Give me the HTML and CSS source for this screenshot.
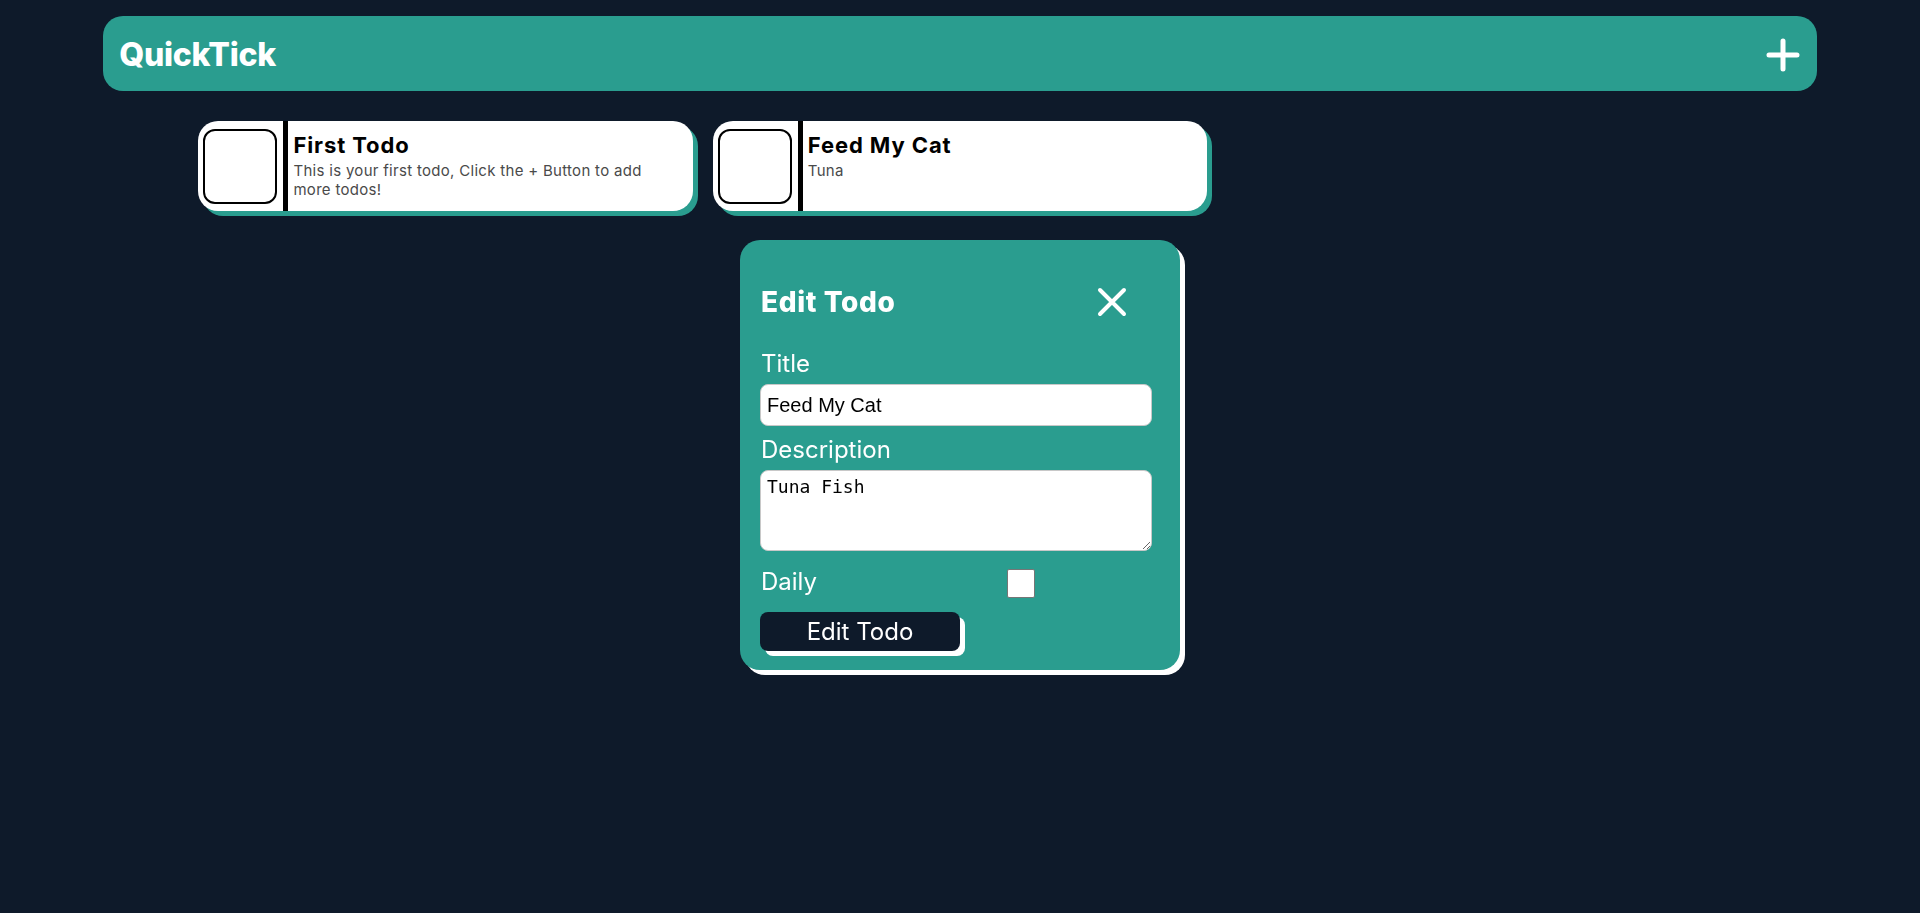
FILE: index.html
```html
<!DOCTYPE html>
<html lang="en">
<head>
<meta charset="utf-8">
<title>QuickTick</title>
<link rel="stylesheet" href="styles.css">
</head>
<body>
  <header class="topbar">
    <h1 class="brand">QuickTick</h1>
    <button class="add-btn" aria-label="Add todo">
      <svg width="34" height="34" viewBox="0 0 34 34"><path d="M17 3v28M3 17h28" stroke="#fff" stroke-width="5" stroke-linecap="round" fill="none"/></svg>
    </button>
  </header>

  <main class="todos">
    <div class="card">
      <div class="check-wrap"><div class="check"></div></div>
      <div class="card-body">
        <h2 class="card-title">First Todo</h2>
        <p class="card-desc">This is your first todo, Click the + Button to add more todos!</p>
      </div>
    </div>
    <div class="card">
      <div class="check-wrap"><div class="check"></div></div>
      <div class="card-body">
        <h2 class="card-title">Feed My Cat</h2>
        <p class="card-desc">Tuna</p>
      </div>
    </div>
  </main>

  <div class="modal">
    <div class="modal-head">
      <h2 class="modal-title">Edit Todo</h2>
      <button class="close-btn" aria-label="Close">
        <svg width="30" height="30" viewBox="0 0 30 30"><path d="M3 3l24 24M27 3L3 27" stroke="#fff" stroke-width="4" stroke-linecap="round" fill="none"/></svg>
      </button>
    </div>
    <label class="field-label" for="title">Title</label>
    <input class="text-input" id="title" type="text" value="Feed My Cat">
    <label class="field-label desc-label" for="desc">Description</label>
    <textarea class="text-area" id="desc">Tuna Fish</textarea>
    <div class="daily-row">
      <label class="field-label daily-label" for="daily">Daily</label>
      <input class="daily-check" id="daily" type="checkbox">
    </div>
    <button class="submit-btn">Edit Todo</button>
  </div>
</body>
</html>
```

FILE: styles.css
```css
* { box-sizing: border-box; }

body {
  margin: 8px;
  background: #0e1a2a;
  font-family: Inter, "Noto Sans", sans-serif;
  min-height: 897px;
}

.topbar {
  width: 90%;
  height: 75px;
  margin: 8px auto 0;
  background: #2a9d8f;
  border-radius: 20px;
  display: flex;
  align-items: center;
  justify-content: space-between;
  padding: 2px 17px 0 16px;
}

.brand {
  margin: 0;
  color: #fff;
  font-size: 32px;
  font-weight: 800;
  letter-spacing: -0.3px;
}

.add-btn {
  background: none;
  border: none;
  padding: 0;
  display: flex;
  cursor: pointer;
}

.todos {
  width: 80%;
  margin: 30px auto 0;
  display: grid;
  grid-template-columns: repeat(3, 1fr);
  gap: 20px;
}

.card {
  height: 90px;
  background: #fff;
  border-radius: 20px;
  box-shadow: 5px 5px 0 #2a9d8f;
  display: flex;
  overflow: hidden;
}

.check-wrap {
  display: flex;
  align-items: center;
  padding: 0 6px 0 5px;
}

.check {
  width: 74px;
  height: 75px;
  border: 2px solid #000;
  border-radius: 12px;
  background: #fff;
}

.card-body {
  flex: 1;
  border-left: 5px solid #000;
  padding: 11px 20px 0 5px;
}

.card-title {
  margin: 0;
  font-size: 22px;
  line-height: 26px;
  font-weight: 700;
  color: #000;
  letter-spacing: 0.9px;
}

.card-desc {
  margin: 3px 0 0;
  font-size: 15px;
  line-height: 19px;
  color: #4a4a4a;
  letter-spacing: 0.3px;
}

.modal {
  position: fixed;
  left: 740px;
  top: 240px;
  width: 440px;
  height: 430px;
  background: #2a9d8f;
  border-radius: 20px;
  box-shadow: 5px 5px 0 #fff;
  padding: 44px 28px 19px 20px;
  display: flex;
  flex-direction: column;
  align-items: flex-start;
}

.modal-head {
  width: 392px;
  height: 36px;
  display: flex;
  align-items: center;
  justify-content: space-between;
  margin-left: 1px;
}

.modal-title {
  margin: 0;
  color: #fff;
  font-size: 28px;
  line-height: 36px;
  font-weight: 800;
  letter-spacing: 0.6px;
}

.close-btn {
  background: none;
  border: none;
  padding: 0;
  margin-right: 26px;
  display: flex;
  cursor: pointer;
}

.field-label {
  display: block;
  color: #fff;
  font-size: 24px;
  line-height: 30px;
  margin: 29px 0 0 1px;
}

.desc-label { margin-top: 9px; }

.text-input {
  display: block;
  width: 392px;
  height: 42px;
  margin-top: 5px;
  border: 1px solid #c8c8c8;
  border-radius: 8px;
  padding: 0 6px;
  font-family: "Liberation Sans", Arial, sans-serif;
  font-size: 20px;
  color: #000;
  background: #fff;
}

.text-area {
  display: block;
  width: 392px;
  height: 81px;
  margin-top: 5px;
  border: 1px solid #c8c8c8;
  border-radius: 8px;
  padding: 5px 6px;
  font-family: "DejaVu Sans Mono", monospace;
  font-size: 18px;
  color: #000;
  background: #fff;
}

.daily-row {
  display: flex;
  align-items: center;
  margin-top: 15px;
  height: 32px;
}

.daily-label {
  margin: 0 0 0 1px;
  width: 246px;
}

.daily-check {
  appearance: none;
  -webkit-appearance: none;
  margin: 3px 0 0;
  width: 28px;
  height: 29px;
  border: 1px solid #767676;
  border-radius: 2px;
  background: #fff;
}

.submit-btn {
  margin-top: 14px;
  width: 200px;
  height: 39px;
  border: none;
  border-radius: 8px;
  background: #0e1a2a;
  color: #fff;
  font-family: Inter, "Noto Sans", sans-serif;
  font-size: 24px;
  box-shadow: 5px 5px 0 #fff;
  cursor: pointer;
}
```
